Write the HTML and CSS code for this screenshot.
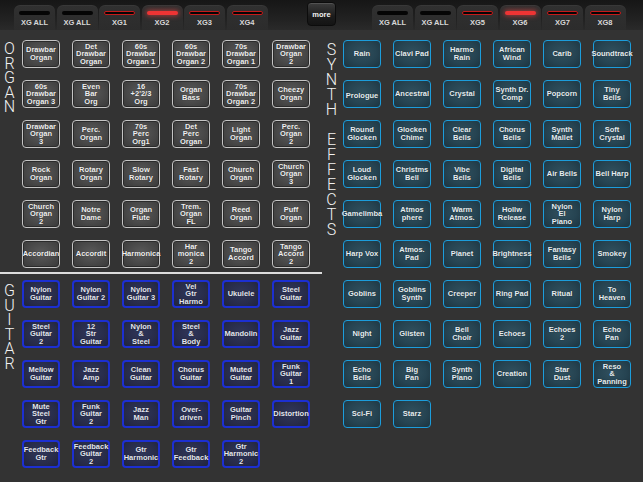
FILE: index.html
```html
<!DOCTYPE html>
<html>
<head>
<meta charset="utf-8">
<link rel="stylesheet" href="styles.css">
</head>
<body>
<div class="topbar">
  <div class="tabs">
    <div class="tab"><span class="ind"></span><span class="tl">XG ALL</span></div>
    <div class="tab"><span class="ind"></span><span class="tl">XG ALL</span></div>
    <div class="tab"><span class="ind red"></span><span class="tl">XG1</span></div>
    <div class="tab"><span class="ind on"></span><span class="tl">XG2</span></div>
    <div class="tab"><span class="ind red"></span><span class="tl">XG3</span></div>
    <div class="tab"><span class="ind red"></span><span class="tl">XG4</span></div>
  </div>
  <div class="more">more</div>
  <div class="tabs right">
    <div class="tab"><span class="ind"></span><span class="tl">XG ALL</span></div>
    <div class="tab"><span class="ind"></span><span class="tl">XG ALL</span></div>
    <div class="tab"><span class="ind red"></span><span class="tl">XG5</span></div>
    <div class="tab"><span class="ind on"></span><span class="tl">XG6</span></div>
    <div class="tab"><span class="ind red"></span><span class="tl">XG7</span></div>
    <div class="tab"><span class="ind red"></span><span class="tl">XG8</span></div>
  </div>
</div>
<div class="main">
  <div class="half left">
    <div class="section organ">
      <div class="vlabel">O<br>R<br>G<br>A<br>N</div>
      <div class="grid">
        <div class="btn g">Drawbar<br>Organ</div>
        <div class="btn g">Det<br>Drawbar<br>Organ</div>
        <div class="btn g">60s<br>Drawbar<br>Organ 1</div>
        <div class="btn g">60s<br>Drawbar<br>Organ 2</div>
        <div class="btn g">70s<br>Drawbar<br>Organ 1</div>
        <div class="btn g">Drawbar<br>Organ<br>2</div>
        <div class="btn g">60s<br>Drawbar<br>Organ 3</div>
        <div class="btn g">Even<br>Bar<br>Org</div>
        <div class="btn g">16<br>+2'2/3<br>Org</div>
        <div class="btn g">Organ<br>Bass</div>
        <div class="btn g">70s<br>Drawbar<br>Organ 2</div>
        <div class="btn g">Cheezy<br>Organ</div>
        <div class="btn g">Drawbar<br>Organ<br>3</div>
        <div class="btn g">Perc.<br>Organ</div>
        <div class="btn g">70s<br>Perc<br>Org1</div>
        <div class="btn g">Det<br>Perc<br>Organ</div>
        <div class="btn g">Light<br>Organ</div>
        <div class="btn g">Perc.<br>Organ<br>2</div>
        <div class="btn g">Rock<br>Organ</div>
        <div class="btn g">Rotary<br>Organ</div>
        <div class="btn g">Slow<br>Rotary</div>
        <div class="btn g">Fast<br>Rotary</div>
        <div class="btn g">Church<br>Organ</div>
        <div class="btn g">Church<br>Organ<br>3</div>
        <div class="btn g">Church<br>Organ<br>2</div>
        <div class="btn g">Notre<br>Dame</div>
        <div class="btn g">Organ<br>Flute</div>
        <div class="btn g">Trem.<br>Organ<br>FL</div>
        <div class="btn g">Reed<br>Organ</div>
        <div class="btn g">Puff<br>Organ</div>
        <div class="btn g">Accordian</div>
        <div class="btn g">Accordit</div>
        <div class="btn g">Harmonica</div>
        <div class="btn g">Har<br>monica<br>2</div>
        <div class="btn g">Tango<br>Accord</div>
        <div class="btn g">Tango<br>Accord<br>2</div>
      </div>
    </div>
    <div class="divider"></div>
    <div class="section guitar">
      <div class="vlabel">G<br>U<br>I<br>T<br>A<br>R</div>
      <div class="grid">
        <div class="btn b">Nylon<br>Guitar</div>
        <div class="btn b">Nylon<br>Guitar 2</div>
        <div class="btn b">Nylon<br>Guitar 3</div>
        <div class="btn b">Vel<br>Gtr<br>Harmo</div>
        <div class="btn b">Ukulele</div>
        <div class="btn b">Steel<br>Guitar</div>
        <div class="btn b">Steel<br>Guitar<br>2</div>
        <div class="btn b">12<br>Str<br>Guitar</div>
        <div class="btn b">Nylon<br>&amp;<br>Steel</div>
        <div class="btn b">Steel<br>&amp;<br>Body</div>
        <div class="btn b">Mandolin</div>
        <div class="btn b">Jazz<br>Guitar</div>
        <div class="btn b">Mellow<br>Guitar</div>
        <div class="btn b">Jazz<br>Amp</div>
        <div class="btn b">Clean<br>Guitar</div>
        <div class="btn b">Chorus<br>Guitar</div>
        <div class="btn b">Muted<br>Guitar</div>
        <div class="btn b">Funk<br>Guitar<br>1</div>
        <div class="btn b">Mute<br>Steel<br>Gtr</div>
        <div class="btn b">Funk<br>Guitar<br>2</div>
        <div class="btn b">Jazz<br>Man</div>
        <div class="btn b">Over-<br>driven</div>
        <div class="btn b">Guitar<br>Pinch</div>
        <div class="btn b">Distortion</div>
        <div class="btn b">Feedback<br>Gtr</div>
        <div class="btn b">Feedback<br>Guitar<br>2</div>
        <div class="btn b">Gtr<br>Harmonic</div>
        <div class="btn b">Gtr<br>Feedback</div>
        <div class="btn b">Gtr<br>Harmonic<br>2</div>
      </div>
    </div>
  </div>
  <div class="half right">
    <div class="section synth">
      <div class="vlabel">S<br>Y<br>N<br>T<br>H<br><br>E<br>F<br>F<br>E<br>C<br>T<br>S</div>
      <div class="grid">
        <div class="btn c">Rain</div>
        <div class="btn c">Clavi Pad</div>
        <div class="btn c">Harmo<br>Rain</div>
        <div class="btn c">African<br>Wind</div>
        <div class="btn c">Carib</div>
        <div class="btn c">Soundtrack</div>
        <div class="btn c low">Prologue</div>
        <div class="btn c">Ancestral</div>
        <div class="btn c">Crystal</div>
        <div class="btn c">Synth Dr.<br>Comp</div>
        <div class="btn c">Popcorn</div>
        <div class="btn c">Tiny<br>Bells</div>
        <div class="btn c">Round<br>Glocken</div>
        <div class="btn c">Glocken<br>Chime</div>
        <div class="btn c">Clear<br>Bells</div>
        <div class="btn c">Chorus<br>Bells</div>
        <div class="btn c">Synth<br>Mallet</div>
        <div class="btn c">Soft<br>Crystal</div>
        <div class="btn c">Loud<br>Glocken</div>
        <div class="btn c">Christms<br>Bell</div>
        <div class="btn c">Vibe<br>Bells</div>
        <div class="btn c">Digital<br>Bells</div>
        <div class="btn c">Air Bells</div>
        <div class="btn c">Bell Harp</div>
        <div class="btn c">Gamelimba</div>
        <div class="btn c">Atmos<br>phere</div>
        <div class="btn c">Warm<br>Atmos.</div>
        <div class="btn c">Hollw<br>Release</div>
        <div class="btn c">Nylon<br>El<br>Piano</div>
        <div class="btn c">Nylon<br>Harp</div>
        <div class="btn c">Harp Vox</div>
        <div class="btn c">Atmos.<br>Pad</div>
        <div class="btn c">Planet</div>
        <div class="btn c">Brightness</div>
        <div class="btn c">Fantasy<br>Bells</div>
        <div class="btn c">Smokey</div>
        <div class="btn c">Goblins</div>
        <div class="btn c">Goblins<br>Synth</div>
        <div class="btn c">Creeper</div>
        <div class="btn c">Ring Pad</div>
        <div class="btn c">Ritual</div>
        <div class="btn c">To<br>Heaven</div>
        <div class="btn c">Night</div>
        <div class="btn c">Glisten</div>
        <div class="btn c">Bell<br>Choir</div>
        <div class="btn c">Echoes</div>
        <div class="btn c">Echoes<br>2</div>
        <div class="btn c">Echo<br>Pan</div>
        <div class="btn c">Echo<br>Bells</div>
        <div class="btn c">Big<br>Pan</div>
        <div class="btn c">Synth<br>Piano</div>
        <div class="btn c">Creation</div>
        <div class="btn c">Star<br>Dust</div>
        <div class="btn c">Reso<br>&amp;<br>Panning</div>
        <div class="btn c">Sci-Fi</div>
        <div class="btn c">Starz</div>
      </div>
    </div>
  </div>
</div>
</body>
</html>
```
FILE: styles.css
```css
html, body {
  margin: 0;
  padding: 0;
}
body {
  width: 643px;
  height: 482px;
  overflow: hidden;
  background: #333333;
  font-family: "Liberation Sans", Arial, sans-serif;
}
.topbar {
  height: 30px;
  display: flex;
  align-items: flex-start;
  padding-left: 14px;
  background: linear-gradient(#161616, #232323 70%, #2a2a2a);
  box-sizing: border-box;
}
.tabs {
  display: flex;
  gap: 1.5px;
  margin-top: 5px;
  height: 25px;
}
.tabs.right {
  margin-left: 36px;
}
.tab {
  width: 41px;
  height: 25px;
  background: linear-gradient(#303030, #2c2c2c);
  border-radius: 6px 6px 0 0;
  display: flex;
  flex-direction: column;
  align-items: center;
  box-sizing: border-box;
  padding-top: 6px;
  box-shadow: inset 0 1px 0 rgba(255,255,255,0.04);
}
.ind {
  display: block;
  width: 31px;
  height: 4px;
  border-radius: 3px;
  background: #050505;
  box-sizing: border-box;
}
.ind.red {
  border: 1px solid #c41a1a;
}
.ind.on {
  background: #ee3434;
  box-shadow: 0 0 5px 1px rgba(255, 70, 70, 0.55);
}
.tl {
  display: block;
  margin-top: 3px;
  font-size: 7.5px;
  font-weight: bold;
  color: #d8d8d8;
  line-height: 9px;
  white-space: nowrap;
}
.more {
  margin-top: 2px;
  margin-left: 39.5px;
  width: 29px;
  height: 24px;
  box-sizing: border-box;
  border-radius: 4px;
  border: 1px solid #0c0c0c;
  background: linear-gradient(#3c3c3c, #1c1c1c 60%, #141414);
  color: #f2f2f2;
  font-size: 7.5px;
  font-weight: bold;
  display: flex;
  align-items: center;
  justify-content: center;
  box-shadow: inset 0 1px 0 rgba(255,255,255,0.12);
}
.main {
  display: grid;
  grid-template-columns: 322px 321px;
}
.half {
  display: flex;
  flex-direction: column;
}
.section {
  display: grid;
  grid-template-columns: 22px auto;
}
.synth {
  grid-template-columns: 21px auto;
}
.vlabel {
  width: 19px;
  text-align: center;
  font-family: Roboto, "Liberation Sans", sans-serif;
  font-weight: 300;
  font-size: 16px;
  line-height: 14.5px;
  color: #f2f2f2;
}
.organ .vlabel {
  padding-top: 12px;
}
.guitar .vlabel {
  padding-top: 4px;
}
.synth .vlabel {
  line-height: 15px;
  padding-top: 12px;
}
.grid {
  display: grid;
  grid-template-columns: repeat(6, 38px);
  grid-auto-rows: 28px;
  column-gap: 12px;
  row-gap: 12px;
}
.organ .grid,
.synth .grid {
  padding-top: 10px;
}
.divider {
  height: 2px;
  background: #dcdcdc;
  margin: 4px 0 6px 0;
}
.btn {
  box-sizing: border-box;
  border-radius: 4px;
  display: flex;
  align-items: center;
  justify-content: center;
  text-align: center;
  white-space: nowrap;
  font-size: 7.5px;
  font-weight: bold;
  line-height: 7.6px;
  color: #f0f0f0;
  text-shadow: 0 0 1px rgba(0,0,0,0.6);
  overflow: visible;
}
.btn.g {
  border: 1.5px solid #c4c4c4;
  background: radial-gradient(ellipse at 50% 45%, #5a5a5a 0%, #484848 55%, #383838 100%);
  box-shadow: inset 0 0 0 1px #2a2a2a;
}
.btn.b {
  border: 2px solid #1c2fd2;
  background: radial-gradient(ellipse at 50% 45%, #30365a 0%, #282c4a 60%, #20243c 100%);
  color: #e4e6f0;
}
.btn.c {
  border: 1.5px solid #1c9ddc;
  background: radial-gradient(ellipse at 50% 45%, #30505e 0%, #264452 55%, #1c3440 100%);
  color: #e6eef2;
}
.btn.low {
  padding-top: 3px;
}
```
